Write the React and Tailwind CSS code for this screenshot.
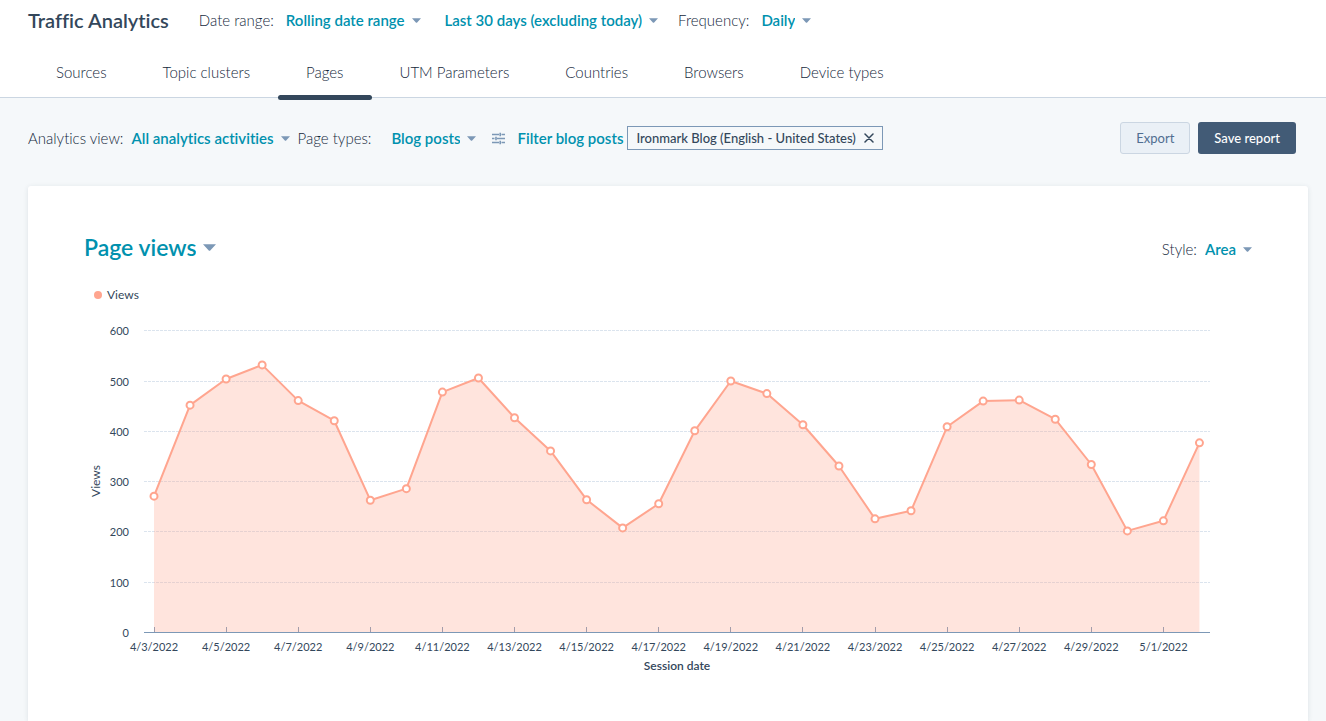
import { useState } from "react";

const tabs = ["Sources", "Topic clusters", "Pages", "UTM Parameters", "Countries", "Browsers", "Device types"];

const views = [
  271, 452, 504, 532, 461, 421, 263, 286, 478, 506, 427, 361, 264, 208, 256,
  401, 500, 475, 413, 331, 226, 242, 409, 460, 462, 424, 334, 202, 222, 377,
];

const yTicks = [0, 100, 200, 300, 400, 500, 600];

const dayLabel = (i) => {
  const date = new Date(2022, 3, 3 + i);
  return `${date.getMonth() + 1}/${date.getDate()}/${date.getFullYear()}`;
};

const Caret = ({ className }) => (
  <svg viewBox="0 0 8 4" className={className} fill="#7c98b6" aria-hidden="true">
    <path d="M0 0h8L4.6 3.7a.8.8 0 0 1-1.2 0z" />
  </svg>
);

const Dropdown = ({ label, options, large }) => {
  const [value, setValue] = useState(options[0]);
  return (
    <span className="relative inline-flex items-center">
      <select
        aria-label={label}
        value={value}
        onChange={(e) => setValue(e.target.value)}
        className={
          large
            ? "cursor-pointer appearance-none bg-transparent pr-5 text-[23px] leading-8 font-semibold text-[#0091ae] [field-sizing:content]"
            : "cursor-pointer appearance-none bg-transparent pr-4 font-semibold text-[#0091ae] [field-sizing:content]"
        }
      >
        {options.map((option) => (
          <option key={option}>{option}</option>
        ))}
      </select>
      <Caret
        className={
          large
            ? "pointer-events-none absolute right-0 h-[7px] w-[13px]"
            : "pointer-events-none absolute right-0 h-[5px] w-[9px]"
        }
      />
    </span>
  );
};

const FilterIcon = () => (
  <svg viewBox="0 0 13 13" className="h-[13px] w-[13px]" fill="none" stroke="#7c98b6" strokeWidth="1.6" aria-hidden="true">
    <path d="M0 2.5h7M9.5 2.5H13M0 6.5h2.5M5 6.5h8M0 10.5h7M9.5 10.5H13" />
    <path d="M8.2 0.7v3.6M4 4.7v3.6M8.2 8.7v3.6" />
  </svg>
);

const ViewsChart = () => {
  const x = (i) => 70 + i * 36.05;
  const y = (value) => 312.5 - value * 0.503;
  const line = views.map((value, i) => `${x(i)},${y(value)}`).join(" ");

  return (
    <svg viewBox="0 0 1168 360" className="block h-auto w-full" role="img" aria-label="Views by session date">
      {yTicks.map((tick) => (
        <g key={tick}>
          {tick > 0 && (
            <line
              x1="60"
              x2="1126"
              y1={Math.floor(y(tick)) + 0.5}
              y2={Math.floor(y(tick)) + 0.5}
              stroke="#dbe4ee"
              strokeDasharray="3 1"
            />
          )}
          <text x="45" y={Math.floor(y(tick)) + 5} textAnchor="end" fontSize="11" fill="#33475b">
            {tick}
          </text>
        </g>
      ))}

      {views.map((value, i) =>
        i % 2 === 0 ? (
          <g key={i}>
            <path d={`M${Math.floor(x(i)) + 0.5} 307v5`} stroke="#7c98b6" />
            <text x={x(i)} y="331" textAnchor="middle" fontSize="11" fill="#33475b">
              {dayLabel(i)}
            </text>
          </g>
        ) : null
      )}

      <polygon points={`${x(0)},312 ${line} ${x(views.length - 1)},312`} fill="#ffa58f" fillOpacity="0.3" />
      <path d="M60 312.5h1066" stroke="#7c98b6" />
      <polyline points={line} fill="none" stroke="#ffa58f" strokeWidth="2" strokeLinejoin="round" />
      {views.map((value, i) => (
        <circle key={i} cx={x(i)} cy={y(value)} r="3.5" fill="#fff" stroke="#ffa58f" strokeWidth="2" />
      ))}

      <text transform="translate(16 161) rotate(-90)" textAnchor="middle" fontSize="12" fill="#33475b">
        Views
      </text>
      <text x="593" y="350" textAnchor="middle" fontSize="12" fontWeight="600" fill="#33475b">
        Session date
      </text>
    </svg>
  );
};

export default function App() {
  const [activeTab, setActiveTab] = useState("Pages");
  const [showFilter, setShowFilter] = useState(true);

  return (
    <div className="flex min-h-screen flex-col bg-[#f5f8fa] font-[Lato,sans-serif] text-[15px] leading-5 text-[#33475b] [font-variant-ligatures:none]">
      <header className="border-b border-[#cbd6e2] bg-white">
        <div className="flex h-10 items-center px-7">
          <h1 className="mr-[30px] text-xl font-semibold">Traffic Analytics</h1>
          <span className="mr-3 font-light text-[#14283c]">Date range:</span>
          <Dropdown label="Date range" options={["Rolling date range", "Custom date range"]} />
          <span className="mr-6" />
          <Dropdown label="Period" options={["Last 30 days (excluding today)", "Last 7 days"]} />
          <span className="mr-3 ml-5 font-light text-[#14283c]">Frequency:</span>
          <Dropdown label="Frequency" options={["Daily", "Weekly", "Monthly"]} />
        </div>
        <nav className="mt-2 flex px-7 font-light text-[#14283c]">
          {tabs.map((tab) => (
            <a
              key={tab}
              href="#"
              onClick={() => setActiveTab(tab)}
              className="relative flex h-[49px] items-center px-7 pb-0.5"
            >
              {tab}
              {tab === activeTab && (
                <span className="absolute inset-x-0 -bottom-[3px] h-[5px] rounded-full bg-[#33475b]" />
              )}
            </a>
          ))}
        </nav>
      </header>

      <main className="flex flex-1 flex-col pr-[18px] pl-7">
        <div className="flex items-center py-6 pr-3">
          <span className="mr-2 font-light text-[#14283c]">Analytics view:</span>
          <Dropdown label="Analytics view" options={["All analytics activities", "Marketing"]} />
          <span className="mr-5 ml-2 font-light text-[#14283c]">Page types:</span>
          <Dropdown label="Page types" options={["Blog posts", "Landing pages"]} />
          <button type="button" className="ml-4 flex items-center gap-3 font-semibold text-[#0091ae]">
            <FilterIcon />
            Filter blog posts
          </button>
          {showFilter && (
            <span className="ml-1 flex h-6 items-center border border-[#7c98b6] px-2 text-[13px] font-medium">
              Ironmark Blog (English - United States)
              <button type="button" aria-label="Remove filter" onClick={() => setShowFilter(false)} className="ml-2">
                <svg viewBox="0 0 10 10" className="h-[10px] w-[10px]" stroke="#33475b" strokeWidth="1.5" strokeLinecap="round">
                  <path d="M1 1l8 8M9 1l-8 8" />
                </svg>
              </button>
            </span>
          )}
          <div className="ml-auto flex gap-2 text-[13px]">
            <button type="button" className="h-8 rounded-[3px] border border-[#cbd6e2] bg-[#eaf0f6] px-[15px] text-[#506e91]">
              Export
            </button>
            <button type="button" className="h-8 rounded-[3px] bg-[#425b76] px-4 font-medium text-white">
              Save report
            </button>
          </div>
        </div>

        <section className="mt-2 flex-1 rounded-t-[3px] bg-white px-14 pt-[45px] shadow-[0_1px_5px_rgba(45,62,80,0.12)]">
          <div className="flex items-center justify-between">
            <Dropdown large label="Metric" options={["Page views", "Entrances"]} />
            <div className="flex items-center gap-2 pt-1">
              <span className="font-light text-[#14283c]">Style:</span>
              <Dropdown label="Style" options={["Area", "Line", "Column"]} />
            </div>
          </div>
          <div className="mt-[22px] mb-[15px] flex items-center gap-[5px] pl-[10px] text-xs leading-5">
            <span className="h-2 w-2 rounded-full bg-[#ffa58f]" />
            Views
          </div>
          <ViewsChart />
        </section>
      </main>
    </div>
  );
}
